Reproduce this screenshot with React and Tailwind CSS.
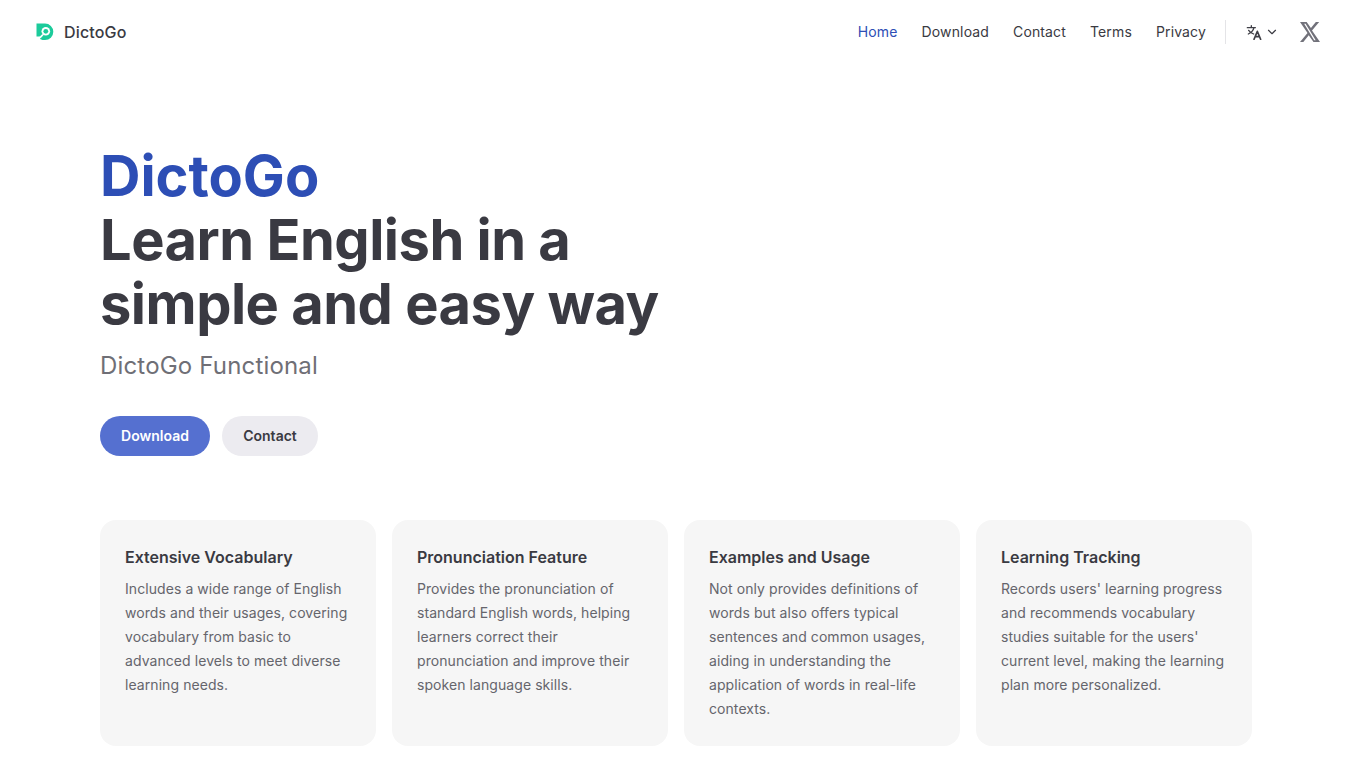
import React from 'react';
import { ChevronDown } from 'lucide-react';

const features = [
  {
    title: 'Extensive Vocabulary',
    text: 'Includes a wide range of English words and their usages, covering vocabulary from basic to advanced levels to meet diverse learning needs.',
  },
  {
    title: 'Pronunciation Feature',
    text: 'Provides the pronunciation of standard English words, helping learners correct their pronunciation and improve their spoken language skills.',
  },
  {
    title: 'Examples and Usage',
    text: 'Not only provides definitions of words but also offers typical sentences and common usages, aiding in understanding the application of words in real-life contexts.',
  },
  {
    title: 'Learning Tracking',
    text: "Records users' learning progress and recommends vocabulary studies suitable for the users' current level, making the learning plan more personalized.",
  },
];

function Logo() {
  return (
    <svg width="18" height="18" viewBox="0 0 18 18">
      <path d="M0.500 0.500h8.500a8.300 8.300 0 0 1 0 16.600H6.500l-2.500 -1.200v-2.300H0.500z" fill="#1ccb9b" />
      <circle cx="9.800" cy="8.300" r="4.300" fill="#fff" />
      <circle cx="9.800" cy="8.300" r="2.400" fill="#1ccb9b" />
      <path d="M7 11.500l-3.200 3.400" stroke="#fff" strokeWidth="1.800" />
    </svg>
  );
}

function TranslateIcon() {
  return (
    <svg width="16" height="16" viewBox="0 0 24 24" fill="none" stroke="#3f3f46" strokeWidth="2" strokeLinecap="round" strokeLinejoin="round">
      <path d="M2 5.500h12M8 2.500v3M4 9.500c2 3 5 4.500 7.500 5.500M12 5.500c-1 4-4 7.500-8.500 9.500" />
      <path d="M12 23l5-12 5 12M14 19h6" strokeWidth="2.400" />
    </svg>
  );
}

function XIcon() {
  return (
    <svg width="20" height="20" viewBox="0 0 24 24" fill="#71717a">
      <path d="M19 0h4l-8.600 10.200L24 24h-7.800l-5.700-8L4 24H0l9-10.800L0 0h8l5.100 7.300L19 0zm-2 21.800h1.800L6.700 2.200H5L17 21.800z" />
    </svg>
  );
}

export default function App() {
  return (
    <div className="min-h-[760px] bg-white font-['Inter',sans-serif] text-[#3a3a42] antialiased">
      <header className="h-16 pl-9 pr-8 flex items-center justify-between">
        <div className="flex items-center gap-[10px]">
          <Logo />
          <span className="text-base font-medium tracking-[0.01em]">DictoGo</span>
        </div>
        <nav className="flex items-center text-sm">
          <div className="flex items-center gap-6 tracking-[0.01em]">
            <span className="text-[#2d4eb5]">Home</span>
            <span>Download</span>
            <span>Contact</span>
            <span>Terms</span>
            <span>Privacy</span>
          </div>
          <div className="w-px h-6 bg-[#e4e4e7] ml-[19px] mr-5"></div>
          <div className="flex items-center gap-[3px]">
            <TranslateIcon />
            <ChevronDown size={14} strokeWidth={2} />
          </div>
          <div className="ml-[21px]">
            <XIcon />
          </div>
        </nav>
      </header>

      <main className="px-[100px] pt-[80px]">
        <h1 className="text-[56px] leading-[64px] font-bold max-w-[600px] tracking-[-0.5px]">
          <span className="text-[#2d4eb5] block tracking-normal">DictoGo</span>
          Learn English in a simple and easy way
        </h1>
        <p className="mt-[14px] text-2xl leading-8 text-[#6f6f76] tracking-[0.17px]">DictoGo Functional</p>
        <div className="mt-[34px] flex gap-3 text-sm font-semibold">
          <button className="h-10 w-[110px] rounded-full bg-[#5570d0] text-white">Download</button>
          <button className="h-10 w-24 rounded-full bg-[#ecebf0]">Contact</button>
        </div>

        <div className="mt-16 grid grid-cols-4 gap-4">
          {features.map((f) => (
            <div key={f.title} className="h-[226px] rounded-2xl bg-[#f6f6f6] px-[25px] pt-[25px]">
              <h3 className="text-base leading-6 font-semibold">{f.title}</h3>
              <p className="mt-2 text-sm leading-6 text-[#65656c] tracking-[0.005em]">{f.text}</p>
            </div>
          ))}
        </div>
      </main>
    </div>
  );
}
